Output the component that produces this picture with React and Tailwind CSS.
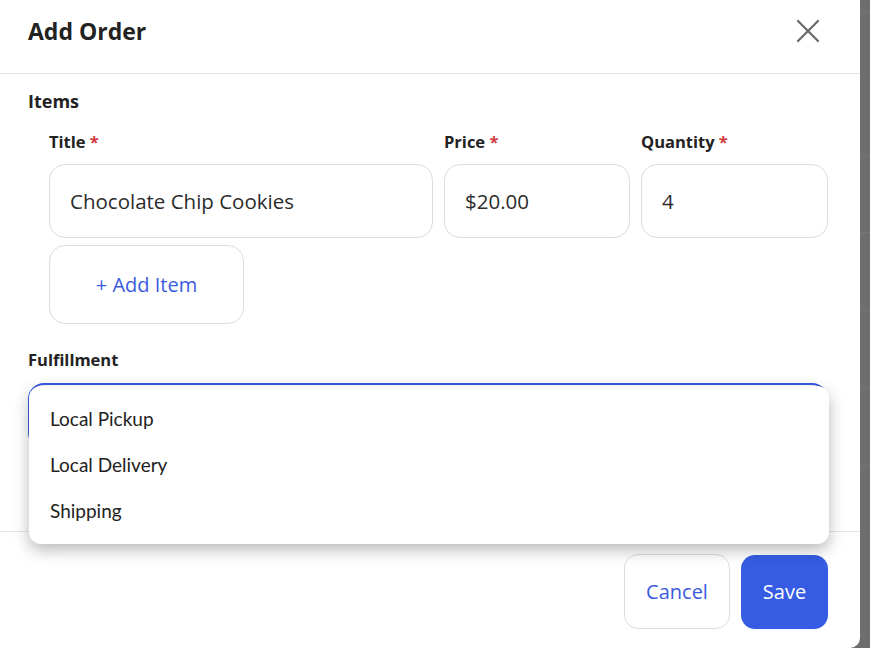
import { X } from 'lucide-react'

function Label({ children }) {
  return (
    <div className="text-[16.5px] leading-[24px] font-bold text-[#222] mb-[10px]">
      {children} <span className="text-[#d13b3b]">*</span>
    </div>
  )
}

function Field({ value }) {
  return (
    <div className="h-[74px] rounded-[16px] border border-[#dddddd] bg-white flex items-center px-[20px] text-[20.5px] text-[#2b2b2b]">
      {value}
    </div>
  )
}

export default function App() {
  return (
    <div className="w-[870px] h-[648px] bg-[#6e6e6e] relative overflow-hidden font-['Open_Sans',sans-serif]">
      {/* backdrop rows */}
      <div className="absolute right-0 w-[10px] top-[12px] h-px bg-[#777]" />
      <div className="absolute right-0 w-[10px] top-[155px] h-px bg-[#777]" />
      <div className="absolute right-0 w-[10px] top-[232px] h-px bg-[#777]" />
      <div className="absolute right-0 w-[10px] top-[310px] h-px bg-[#777]" />
      <div className="absolute right-0 w-[10px] top-[387px] h-px bg-[#777]" />
      <div className="absolute right-0 w-[10px] top-[465px] h-px bg-[#777]" />

      <div className="relative w-[860px] h-[648px] bg-white rounded-br-[10px] flex flex-col">
        {/* Header */}
        <div className="h-[74px] border-b border-[#e6e6e6] flex items-start justify-between pl-[28px] pr-[32px] shrink-0">
          <h2 className="pt-[16px] text-[23px] leading-[30px] font-bold text-[#222]">Add Order</h2>
          <button className="text-[#6b6b6b] mt-[11px]"><X size={40} strokeWidth={1.4} /></button>
        </div>

        {/* Body */}
        <div className="flex-1 px-[28px] pt-[14px]">
          <div className="text-[18px] leading-[26px] font-bold text-[#222]">Items</div>

          <div className="pl-[21px] mt-[16px]">
            <div className="flex gap-[11px]">
              <div className="w-[384px]">
                <Label>Title</Label>
                <Field value="Chocolate Chip Cookies" />
              </div>
              <div className="w-[186px]">
                <Label>Price</Label>
                <Field value="$20.00" />
              </div>
              <div className="w-[187px]">
                <Label>Quantity</Label>
                <Field value="4" />
              </div>
            </div>
            <button className="mt-[7px] w-[195px] h-[79px] rounded-[16px] border border-[#dddddd] text-[#3a5be0] text-[20px]">
              + Add Item
            </button>
          </div>

          <div className="mt-[24px] text-[16.5px] leading-[24px] font-bold text-[#222]">Fulfillment</div>
          <div className="mt-[11px] w-[800px] h-[66px] rounded-[16px] border-2 border-[#3a5be0]" />
        </div>

        {/* Footer */}
        <div className="h-[117px] border-t border-[#e6e6e6] flex items-start justify-end gap-[11px] pr-[32px] pt-[22px] shrink-0">
          <button className="w-[106px] h-[75px] rounded-[14px] border border-[#dddddd] text-[#3a5be0] text-[20px]">Cancel</button>
          <button className="w-[87px] h-[74px] mt-[1px] rounded-[14px] bg-[#355ce3] text-white text-[20px]">Save</button>
        </div>

        {/* Dropdown menu */}
        <div className="absolute left-[29px] top-[386px] w-[800px] h-[158px] bg-white rounded-[12px] shadow-[0_6px_16px_rgba(0,0,0,0.28)] pt-[10px] font-['Lato',sans-serif]">
          {['Local Pickup', 'Local Delivery', 'Shipping'].map(o => (
            <div key={o} className="h-[46px] flex items-center pl-[21px] text-[19px] text-[#222]">{o}</div>
          ))}
        </div>
      </div>
    </div>
  )
}
